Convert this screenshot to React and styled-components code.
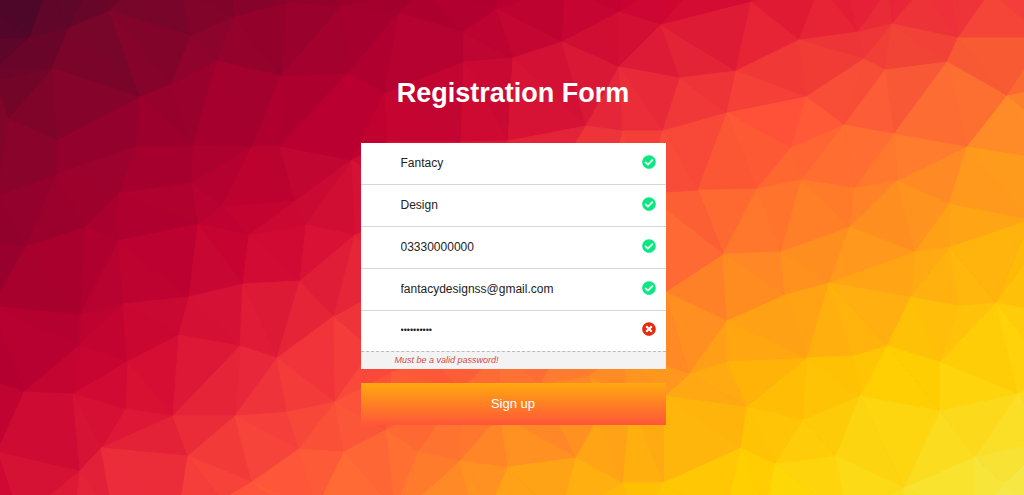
import React from 'react';
import styled, { createGlobalStyle } from 'styled-components';
import { FaCheckCircle, FaTimesCircle } from 'react-icons/fa';

const fields = [
  { id: 'firstName', label: 'First name', type: 'text', value: 'Fantacy' },
  { id: 'lastName', label: 'Last name', type: 'text', value: 'Design' },
  { id: 'phone', label: 'Phone', type: 'tel', value: '03330000000' },
  { id: 'email', label: 'Email', type: 'email', value: 'fantacydesignss@gmail.com' },
  {
    id: 'password',
    label: 'Password',
    type: 'password',
    value: 'abcdefghij',
    error: 'Must be a valid password!',
  },
];

// Low poly backdrop: corner points of the mesh
const meshPoints = [
  // above the top edge
  [-40, -20], [48, -12], [88, -14], [126, -4], [180, -12], [233, -14], [300, -20],
  [425, -10], [500, -14], [565, -12], [621, -12], [661, -14], [700, -20], [820, -14],
  [846, -14], [888, -10], [896, -14], [921, -10], [951, -14], [990, -8], [1060, -20],
  // upper left
  [-30, 39], [-3, 68], [29, 38], [52, 68], [69, 28], [109, 11], [140, 97], [57, 141],
  [8, 119], [-4, 80], [191, 36], [234, 17], [171, 85], [217, 61], [193, 146], [136, 147],
  [57, 174], [119, 193], [-3, 196], [26, 247], [86, 227], [118, 241], [192, 183],
  [198, 224], [222, 206], [252, 147], [280, 146], [281, 76], [287, 3], [295, 201],
  [249, 235], [306, 225], [342, 6], [-25, 240],
  // upper middle
  [399, 13], [348, 73], [384, 94], [463, 32], [464, 62], [497, 9], [513, 58], [562, 42],
  [619, 12], [619, 67], [661, 25], [680, 78], [586, 126], [623, 131], [663, 131],
  [508, 141], [461, 142], [387, 142], [352, 160],
  // upper right
  [751, 2], [736, 71], [799, 40], [858, 32], [892, 24], [864, 59], [885, 70], [806, 97],
  [727, 113], [958, 38], [947, 62], [1007, 96], [844, 125], [894, 134], [967, 147],
  [791, 148], [757, 189], [801, 180], [855, 188], [897, 181], [698, 190], [850, 227],
  [949, 204], [1045, 38], [1060, 85], [1060, 140], [1050, 160], [1050, 228],
  // right
  [723, 254], [781, 252], [829, 283], [915, 252], [950, 247], [665, 292], [727, 321],
  [785, 295], [911, 297], [959, 306], [996, 303], [689, 374], [727, 362], [807, 358],
  [853, 356], [887, 346], [940, 362], [1030, 220], [1045, 312], [1048, 372],
  // lower right
  [747, 407], [664, 396], [803, 420], [860, 396], [940, 411], [1018, 394], [741, 448],
  [775, 464], [836, 456], [904, 488], [975, 457], [1004, 484], [1050, 440],
  // left
  [80, 315], [-8, 306], [123, 304], [80, 345], [127, 362], [189, 297], [179, 335],
  [243, 284], [300, 281], [334, 316], [240, 346], [277, 358], [173, 416], [125, 409],
  [73, 394], [24, 392], [-15, 378], [-3, 452], [372, 350], [355, 235],
  // lower left
  [80, 471], [101, 448], [188, 456], [235, 416], [287, 412], [335, 402], [299, 449],
  [252, 482], [344, 452], [-20, 470],
  // behind the form
  [420, 210], [480, 220], [540, 200], [600, 210], [645, 193], [400, 280], [460, 300],
  [530, 280], [590, 290], [430, 360], [500, 350], [560, 350], [620, 350], [392, 372],
  [462, 390], [540, 385], [590, 376], [630, 400],
  // lower middle
  [386, 430], [418, 452], [460, 461], [508, 467], [576, 458], [622, 483], [663, 483],
  [500, 415], [598, 418],
  // below the bottom edge
  [-30, 520], [20, 520], [74, 520], [114, 520], [179, 512], [200, 540], [222, 500],
  [303, 520], [316, 510], [395, 510], [404, 512], [475, 520], [490, 508], [560, 520],
  [640, 530], [724, 520], [766, 512], [848, 520], [900, 530], [975, 520], [1060, 520],
];

// Colours on a regular grid, blended for every face of the mesh
const meshColors = [
  ['4a0629', '700729', '88032b', 'a2002e', 'b80030', 'ca0232', 'dc1233', 'e82438', 'f43c3b'],
  ['7e0529', '96002c', 'ae002f', 'c00030', 'd60f35', 'f0343a', 'ff5238', 'ff6837', 'ff8a29'],
  ['96002c', 'b40030', 'cc0432', 'e41f38', 'f2383c', 'ff6038', 'ff8029', 'ff9c1a', 'ffb808'],
  ['b80030', 'd00631', 'ea283a', 'fd4c3a', 'ff6c37', 'ff9222', 'ffb408', 'ffcc00', 'ffd60a'],
  ['d20a33', 'ec2c3a', 'ff523a', 'ff7433', 'ffa018', 'ffc004', 'ffd400', 'fbe020', 'f5e94a'],
].map((row) =>
  row.map((hex) => [0, 2, 4].map((i) => parseInt(hex.slice(i, i + 2), 16)))
);

const clamp = (value, max) => Math.min(Math.max(value, 0), max);

const colorAt = (x, y) => {
  const gx = clamp(x / 128, 7.999);
  const gy = clamp(y / 124, 3.999);
  const col = Math.floor(gx);
  const row = Math.floor(gy);
  const fx = gx - col;
  const fy = gy - row;
  const rgb = [0, 1, 2].map((i) => {
    const top = meshColors[row][col][i] * (1 - fx) + meshColors[row][col + 1][i] * fx;
    const bottom = meshColors[row + 1][col][i] * (1 - fx) + meshColors[row + 1][col + 1][i] * fx;
    return Math.round(top * (1 - fy) + bottom * fy);
  });
  return `rgb(${rgb.join(', ')})`;
};

const circumcircle = (points, tri) => {
  const [[ax, ay], [bx, by], [cx, cy]] = tri.map((i) => points[i]);
  const d = 2 * (ax * (by - cy) + bx * (cy - ay) + cx * (ay - by));
  const a = ax * ax + ay * ay;
  const b = bx * bx + by * by;
  const c = cx * cx + cy * cy;
  const x = (a * (by - cy) + b * (cy - ay) + c * (ay - by)) / d;
  const y = (a * (cx - bx) + b * (ax - cx) + c * (bx - ax)) / d;
  return { tri, x, y, r: (ax - x) ** 2 + (ay - y) ** 2 };
};

// Bowyer-Watson triangulation
const triangulate = (source) => {
  const n = source.length;
  const points = [...source, [-9000, -9000], [12000, -9000], [500, 14000]];
  let faces = [circumcircle(points, [n, n + 1, n + 2])];

  source.forEach(([px, py], index) => {
    const edges = new Map();
    faces = faces.filter((face) => {
      if ((px - face.x) ** 2 + (py - face.y) ** 2 >= face.r) return true;
      const [a, b, c] = face.tri;
      [[a, b], [b, c], [c, a]].forEach((edge) => {
        const key = [...edge].sort((p, q) => p - q).join('-');
        if (edges.has(key)) edges.delete(key);
        else edges.set(key, edge);
      });
      return false;
    });
    edges.forEach(([a, b]) => faces.push(circumcircle(points, [a, b, index])));
  });

  return faces
    .filter((face) => face.tri.every((i) => i < n))
    .map((face) => face.tri.map((i) => points[i]));
};

const meshFaces = triangulate(meshPoints).map((corners) => {
  const x = (corners[0][0] + corners[1][0] + corners[2][0]) / 3;
  const y = (corners[0][1] + corners[1][1] + corners[2][1]) / 3;
  return { points: corners.map((p) => p.join(',')).join(' '), color: colorAt(x, y) };
});

const App = () => {
  return (
    <Page>
      <GlobalStyle />
      <Backdrop viewBox="0 0 1024 495" preserveAspectRatio="xMidYMid slice" aria-hidden="true">
        {meshFaces.map((face) => (
          <polygon key={face.points} points={face.points} fill={face.color} stroke={face.color} />
        ))}
      </Backdrop>

      <Form onSubmit={(e) => e.preventDefault()} noValidate>
        <Title>Registration Form</Title>
        <Card>
          {fields.map((field) => (
            <Field key={field.id}>
              <FieldRow $invalid={field.error}>
                <Input
                  id={field.id}
                  type={field.type}
                  aria-label={field.label}
                  aria-invalid={Boolean(field.error)}
                  defaultValue={field.value}
                  autoComplete="off"
                />
                <Status $invalid={field.error}>
                  {field.error ? <FaTimesCircle /> : <FaCheckCircle />}
                </Status>
              </FieldRow>
              {field.error && <ErrorText>{field.error}</ErrorText>}
            </Field>
          ))}
        </Card>
        <SubmitButton type="submit">Sign up</SubmitButton>
      </Form>
    </Page>
  );
};

// Styled Components
const GlobalStyle = createGlobalStyle`
  * {
    box-sizing: border-box;
  }

  body {
    margin: 0;
    font-family: 'Liberation Sans', Arial, sans-serif;
  }
`;

const Page = styled.main`
  position: relative;
  display: flex;
  justify-content: center;
  min-height: 100vh;
  padding: 78px 16px 24px 18px;
  overflow: hidden;
  background: #e41f38;
`;

const Backdrop = styled.svg`
  position: absolute;
  inset: 0;
  width: 100%;
  height: 100%;
`;

const Form = styled.form`
  position: relative;
  width: 100%;
  max-width: 305px;
`;

const Title = styled.h1`
  margin: 0 0 35px;
  color: #fff;
  font-size: 27px;
  font-weight: 700;
  line-height: 30px;
  text-align: center;
`;

const Card = styled.div`
  background: #fff;
`;

const Field = styled.div`
  & + & {
    border-top: 1px solid #d6d6d6;
  }
`;

const FieldRow = styled.div`
  display: flex;
  align-items: center;
  height: ${(props) => (props.$invalid ? '40px' : '41px')};
  padding: 0 10px 2px 40px;
`;

const Input = styled.input`
  flex: 1;
  min-width: 0;
  height: 38px;
  padding: 0;
  border: none;
  outline: none;
  background: transparent;
  color: #222;
  font-family: inherit;
  font-size: ${(props) => (props.type === 'password' ? '9px' : '12px')};
`;

const Status = styled.span`
  display: flex;
  padding-bottom: 2px;
  color: ${(props) => (props.$invalid ? '#e8290b' : '#0be881')};
  font-size: 14px;
`;

const ErrorText = styled.p`
  margin: 0;
  padding: 0 34px;
  border-top: 1px dashed #bbb;
  background: #f3f3f3;
  color: #d04a4a;
  font-size: 9px;
  font-style: italic;
  line-height: 17px;
`;

const SubmitButton = styled.button`
  width: 100%;
  height: 42px;
  margin-top: 14px;
  padding: 0 0 2px;
  border: none;
  background: linear-gradient(#ffa910, #ff5638);
  color: #fff;
  font-family: inherit;
  font-size: 13px;
  cursor: pointer;
`;

export default App;
